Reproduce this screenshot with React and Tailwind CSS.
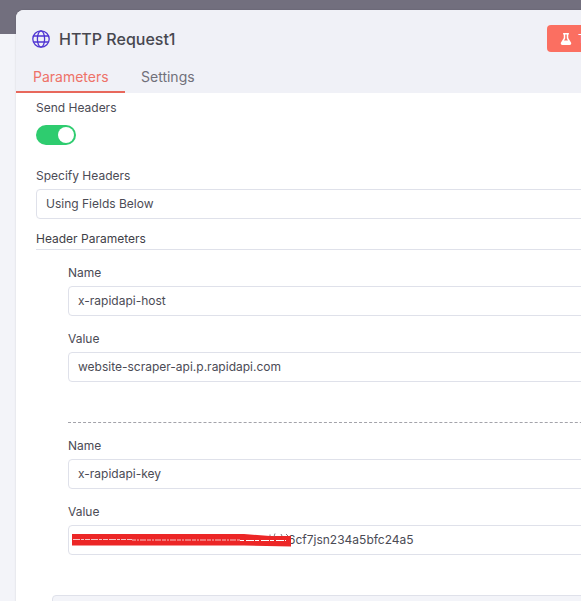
import React from 'react';
import { FaFlask } from 'react-icons/fa';

const Field = ({ label, value, className = '' }) => (
  <div className={className}>
    <label className="block text-[12px] leading-[15px] text-[#4b4b55] mb-[6px]">{label}</label>
    <div className="h-[30px] w-[560px] flex items-center px-[9px] border border-[#dfe1ea] rounded-[4px] bg-white text-[12px] text-[#4b4b55]">
      {value}
    </div>
  </div>
);

const GlobeIcon = () => (
  <svg width="18" height="18" viewBox="0 0 18 18" fill="none" stroke="#4f35d2" strokeWidth="1.3" className="shrink-0">
    <circle cx="9" cy="9" r="8.2" />
    <ellipse cx="9" cy="9" rx="3.6" ry="8.2" />
    <path d="M1.6 6H16.4M1.6 12H16.4" />
  </svg>
);

// red marker scribbled over the secret part of the key
const Redacted = () => (
  <svg width="219" height="14" viewBox="0 0 219 14" className="shrink-0 relative z-10">
    <path d="M0 1H172L198 3H219V13.5L172 12.5H0Z" fill="#ec2626" />
    <path d="M198 1.5v1.5M203 0.5l-1 3M209 1l1 2M214 1l2 2" stroke="#85797d" strokeWidth="1" fill="none" />
    <path d="M1 6.5H60" stroke="#f7c3c3" strokeWidth="1" strokeDasharray="7 1 3 1 5 1" />
    <path d="M60 7H168" stroke="#f7c3c3" strokeWidth="1" strokeDasharray="4 1 2 1 6 1" />
    <path d="M168 7.5H214" stroke="#fff" strokeWidth="1" strokeDasharray="4 2 8 1" />
  </svg>
);

const App = () => {
  return (
    <div
      className="relative w-[581px] h-[601px] overflow-hidden bg-[#f3f4f9] text-[#4b4b55]"
      style={{ fontFamily: 'Inter, "Noto Sans", sans-serif' }}
    >
      {/* Dimmed top bar behind the modal */}
      <div className="h-[34px] bg-[#726f7e]" />

      {/* Node modal */}
      <div className="absolute left-[16px] top-[10px] w-[640px] h-[640px] rounded-tl-[8px] bg-white shadow-[0_0_2px_rgba(0,0,0,0.15)]">
        <div className="h-[83px] bg-[#f0f1f7] rounded-tl-[8px]">
          <div className="flex items-center justify-between h-[57px] pl-[16px] pr-[19px]">
            <div className="flex items-center gap-[9px]">
              <GlobeIcon />
              <span className="text-[16px] font-medium text-[#47474f]">HTTP Request1</span>
            </div>
            <div className="flex items-center gap-[6px] h-[27px] w-[90px] pl-[13px] rounded-[4px] bg-[#fb6f61] text-white text-[12px]">
              <FaFlask size={12} />
              <span>Test</span>
            </div>
          </div>
          <div className="flex h-[26px] -mt-[1px]">
            <div className="w-[109px] h-[27px] pl-[17px] text-[14px] text-[#ee7268] border-b-2 border-[#e8685c]">Parameters</div>
            <div className="pl-[16px] text-[14px] text-[#70707a]">Settings</div>
          </div>
        </div>

        <div className="pl-[20px] pt-[7px]">
          <div className="text-[12px] leading-[15px]">Send Headers</div>
          <div className="mt-[10px] w-[40px] h-[20px] rounded-full bg-[#2ecc6f] flex items-center justify-end pr-[2px]">
            <div className="w-[16px] h-[16px] rounded-full bg-white" />
          </div>

          <Field label="Specify Headers" value="Using Fields Below" className="mt-[23px]" />

          <div className="mt-[12px] w-[560px] h-[19px] border-b border-[#dfe1ea] text-[12px] leading-[15px] font-normal text-[#3f3f48]">Header Parameters</div>

          <div className="pl-[32px] pt-[15px]">
            <Field label="Name" value="x-rapidapi-host" />
            <Field label="Value" value="website-scraper-api.p.rapidapi.com" className="mt-[15px]" />
            <div className="mt-[40px] border-t border-dashed border-[#a3a3aa] w-[560px]" />
            <Field label="Name" value="x-rapidapi-key" className="mt-[15px]" />
            <Field
              label="Value"
              className="mt-[15px]"
              value={
                <span className="flex items-center -ml-[6px]">
                  <Redacted />
                  <span className="-ml-[3px]">6cf7jsn234a5bfc24a5</span>
                </span>
              }
            />
          </div>

          <div className="mt-[40px] ml-[16px] h-[40px] w-[560px] rounded-t-[4px] border border-[#dfe1ea] bg-[#f3f4f9]" />
        </div>
      </div>
    </div>
  );
};

export default App;
